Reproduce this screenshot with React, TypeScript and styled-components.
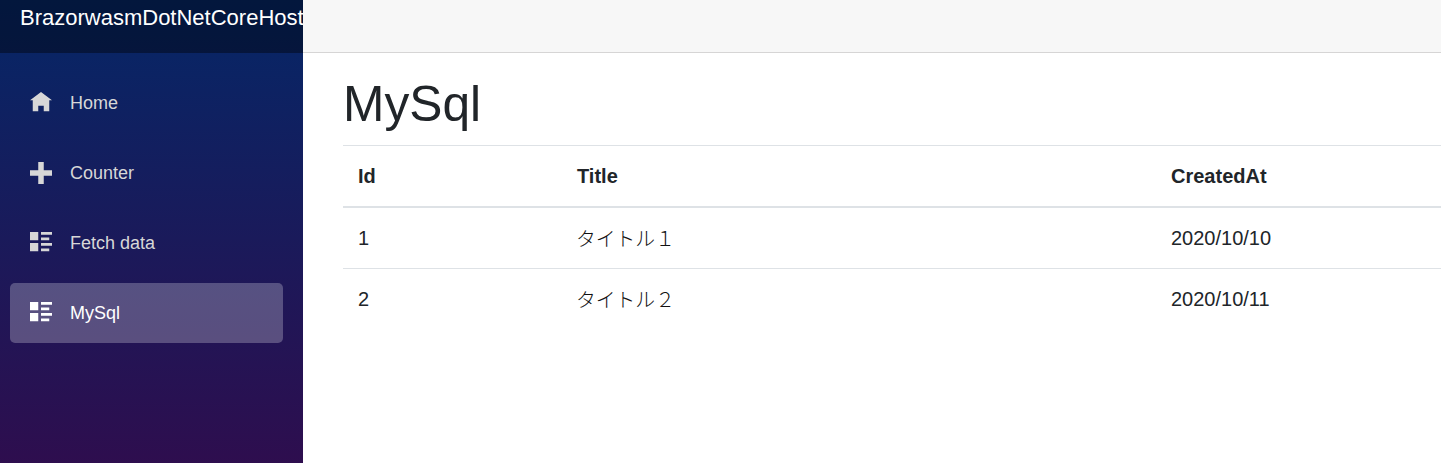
import styled, { createGlobalStyle } from "styled-components";

const GlobalStyle = createGlobalStyle`
  html, body {
    margin: 0;
    height: 100%;
    overflow: hidden;
    background: #fff;
    font-family: "Liberation Sans", Arial, "Noto Sans CJK JP", sans-serif;
    color: #212529;
  }
  #root { height: 100%; }
  * { box-sizing: border-box; }
`;

const ICONS = {
  home: "M4 0l-4 3h1v4h2v-2h2v2h2v-4.03l1 .03-4-3z",
  plus: "M3 0v3h-3v2h3v3h2v-3h3v-2h-3v-3h-2z",
  listRich: "M0 0v3h3v-3h-3zm4 0v1h4v-1h-4zm0 2v1h3v-1h-3zm-4 2v3h3v-3h-3zm4 0v1h4v-1h-4zm0 2v1h3v-1h-3z",
};

const navItems = [
  { label: "Home", icon: ICONS.home },
  { label: "Counter", icon: ICONS.plus },
  { label: "Fetch data", icon: ICONS.listRich },
  { label: "MySql", icon: ICONS.listRich, active: true },
];

const rows = [
  { id: 1, title: "タイトル１", createdAt: "2020/10/10" },
  { id: 2, title: "タイトル２", createdAt: "2020/10/11" },
];

export default function App() {
  return (
    <Page>
      <GlobalStyle />
      <Sidebar>
        <Brand>BrazorwasmDotNetCoreHost</Brand>
        <Nav>
          {navItems.map((item) => (
            <NavItem key={item.label} $active={item.active}>
              <NavIcon viewBox="0 0 8 8">
                <path d={item.icon} />
              </NavIcon>
              {item.label}
            </NavItem>
          ))}
        </Nav>
      </Sidebar>
      <Main>
        <TopRow />
        <Content>
          <Heading>MySql</Heading>
          <Table>
            <colgroup>
              <col width="219" />
              <col width="594" />
              <col />
            </colgroup>
            <thead>
              <tr>
                <HeadCell>Id</HeadCell>
                <HeadCell>Title</HeadCell>
                <HeadCell>CreatedAt</HeadCell>
              </tr>
            </thead>
            <tbody>
              {rows.map((row) => (
                <tr key={row.id}>
                  <Cell>{row.id}</Cell>
                  <TitleCell>{row.title}</TitleCell>
                  <Cell>{row.createdAt}</Cell>
                </tr>
              ))}
            </tbody>
          </Table>
        </Content>
      </Main>
    </Page>
  );
}

const Page = styled.div`
  display: flex;
  height: 463px;
  width: 1441px;
  overflow: hidden;
`;

const Sidebar = styled.div`
  width: 303px;
  flex-shrink: 0;
  background-image: linear-gradient(180deg, #052767 0%, #3a0647 130%);
  overflow: hidden;
`;

const Brand = styled.div`
  height: 53px;
  padding: 6px 0 0 20px;
  background: rgba(0, 0, 0, 0.4);
  color: #fff;
  font-size: 22px;
  line-height: 24px;
  white-space: nowrap;
`;

const Nav = styled.nav`
  display: flex;
  flex-direction: column;
  gap: 10px;
  padding: 20px 20px 0 10px;
`;

const NavItem = styled.a<{ $active?: boolean }>`
  display: flex;
  align-items: center;
  height: 60px;
  padding-left: 20px;
  border-radius: 5px;
  font-size: 18px;
  color: ${(p) => (p.$active ? "#fff" : "#d7d7d7")};
  background: ${(p) => (p.$active ? "rgba(255, 255, 255, 0.25)" : "transparent")};
`;

const NavIcon = styled.svg`
  width: 22px;
  height: 22px;
  margin-right: 18px;
  fill: currentColor;
  flex-shrink: 0;
`;

const Main = styled.div`
  flex: 1;
  min-width: 0;
`;

const TopRow = styled.div`
  height: 53px;
  background: #f7f7f7;
  border-bottom: 1px solid #d6d5d5;
`;

const Content = styled.div`
  padding: 22px 0 0 40px;
`;

const Heading = styled.h1`
  margin: 0 0 12px;
  font-size: 49.7px;
  font-weight: 400;
  line-height: 58px;
`;

const Table = styled.table`
  width: 100%;
  table-layout: fixed;
  border-collapse: separate;
  border-spacing: 0;
  font-size: 20px;
  line-height: 29px;
`;

const HeadCell = styled.th`
  height: 63px;
  padding: 0 15px;
  text-align: left;
  font-weight: 700;
  border-top: 1px solid #dee2e6;
  border-bottom: 2px solid #dee2e6;
`;

const Cell = styled.td`
  height: 61px;
  padding: 0 15px;
  border-top: 1px solid #dee2e6;
  font-weight: 400;

  tr:first-child > & {
    height: 60px;
    border-top: none;
  }
`;

const TitleCell = styled(Cell)`
  padding-left: 14px;
  padding-bottom: 2px;
  font-family: "Noto Sans CJK JP", sans-serif;
  font-weight: 300;
  font-size: 19.8px;
  color: #111;
`;
